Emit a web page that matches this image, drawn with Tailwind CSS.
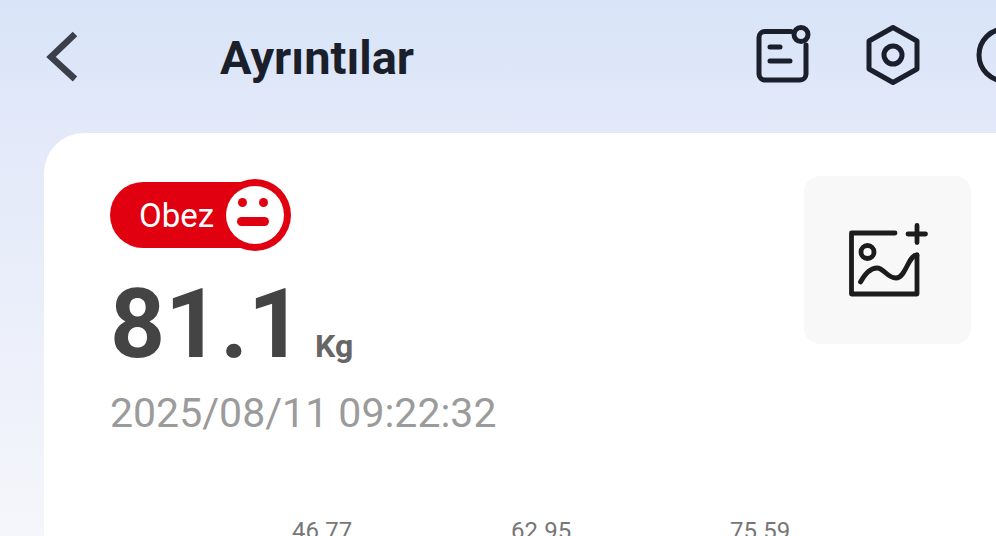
<!DOCTYPE html>
<html lang="en">
<head>
  <meta charset="UTF-8" />
  <meta name="viewport" content="width=device-width, initial-scale=1" />
  <title>Ayrıntılar</title>
  <script src="https://cdn.jsdelivr.net/npm/@tailwindcss/browser@4"></script>
</head>
<body class="overflow-hidden">
  <div class="w-[996px] h-[536px] overflow-hidden flex flex-col bg-linear-to-b from-[#d8e4f8] via-[#e3e9f9] via-25% to-[#f5f6fb] font-['Roboto',sans-serif]">

    <!-- top bar -->
    <header class="h-[133px] shrink-0 flex items-start overflow-hidden pt-[25px]">
      <svg class="ml-[40px] w-[44px] h-[60px] shrink-0" viewBox="0 0 44 60" fill="none" stroke="#3a3f4a" stroke-width="6.5">
        <path d="M35 9 L11 32 L35 54" />
      </svg>
      <h1 class="ml-[136px] w-[535px] shrink-0 mt-[6px] text-[47px] leading-[54px] font-bold text-[#1a1f2b]">Ayrıntılar</h1>
      <svg class="w-[58px] h-[60px] shrink-0" viewBox="0 0 58 60" fill="none" stroke="#1a1f2b" stroke-width="5">
        <path d="M36 6.500 H10 a6 6 0 0 0 -6 6 V49 a6 6 0 0 0 6 6 H45 a6 6 0 0 0 6 -6 V20" stroke-linecap="round" />
        <circle cx="46" cy="9.500" r="7" />
        <path d="M15 22 H25 M15 36 H35" stroke-linecap="round" />
      </svg>
      <svg class="ml-[51px] w-[58px] h-[60px] shrink-0" viewBox="0 0 58 60" fill="none" stroke="#1a1f2b" stroke-width="5">
        <path d="M29 2.500 L53 16 V44 L29 57.500 L5 44 V16 Z" stroke-linejoin="round" />
        <circle cx="29" cy="30" r="9" />
      </svg>
      <svg class="ml-[54px] w-[58px] h-[60px] shrink-0" viewBox="0 0 58 60" fill="none" stroke="#1a1f2b" stroke-width="5">
        <circle cx="29" cy="30" r="26" />
      </svg>
    </header>

    <!-- card -->
    <main class="flex-1 ml-[44px] bg-white rounded-tl-[40px] pl-[66px] pt-[49px] overflow-hidden">
      <div class="flex justify-between items-start">
        <div class="w-[640px]">
          <!-- status pill -->
          <div class="relative w-[180px] h-[66px] pl-[29px] flex items-center rounded-full bg-[#e0000f] text-[#fff] text-[33px] leading-none">
            Obez
            <div class="absolute -right-[1px] top-[-3px] w-[72px] h-[72px] rounded-full bg-[#e0000f] flex items-center justify-center">
              <svg class="w-[60px] h-[60px]" viewBox="0 0 60 60">
                <circle cx="30" cy="30" r="29" fill="#fff" />
                <circle cx="17.500" cy="17.500" r="4.500" fill="#e0000f" />
                <circle cx="38.500" cy="17.500" r="4.500" fill="#e0000f" />
                <rect x="12" y="32" width="32" height="9" rx="4.500" fill="#e0000f" />
              </svg>
            </div>
          </div>
          <!-- weight -->
          <div class="flex items-baseline mt-[23px] text-[#444444]">
            <span class="text-[96px] leading-[106px] font-bold">81.1</span>
            <span class="ml-[12px] text-[32px] leading-none font-bold text-[#666666]">Kg</span>
          </div>
          <p class="mt-[13px] text-[41px] leading-[47px] text-[#9b9b9b]">2025/08/11 09:22:32</p>
        </div>
        <!-- add image -->
        <div class="mr-[25px] -mt-[6px] w-[167px] h-[168px] shrink-0 rounded-[16px] bg-[#f8f8f8] flex items-center justify-center">
          <svg class="w-[84px] h-[76px]" viewBox="0 0 84 76" fill="none" stroke="#1c1c1c" stroke-width="4.800" stroke-linecap="round" stroke-linejoin="round">
            <path d="M49 11 H5.500 V72 H71 V33" />
            <path d="M62 12 H79.500 M71 3.500 V20.500" />
            <circle cx="21.500" cy="30" r="6.500" />
            <path d="M14.500 60 C20 50 26 46 31 46 C38 46 41 56 50 56 C60 56 62 33 71 33" />
          </svg>
        </div>
      </div>
      <!-- chart scale -->
      <div class="flex mt-[80px] pl-[182px] gap-[158px] text-[24px] leading-[28px] text-[#777777]">
        <span class="w-[61px]">46.77</span>
        <span class="w-[61px]">62.95</span>
        <span class="w-[61px]">75.59</span>
      </div>
    </main>
  </div>
</body>
</html>
